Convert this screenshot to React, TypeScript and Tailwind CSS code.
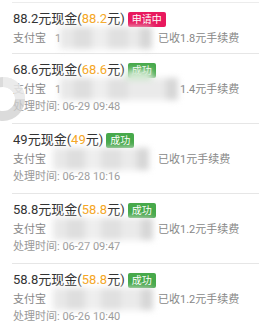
import React from "react";

type Rec = {
  amount: string;
  status: "pending" | "ok";
  acct: string;
  fee: string;
  time?: string;
  blurW: number;
  green?: boolean;
};

const records: Rec[] = [
  { amount: "88.2", status: "pending", acct: "1", fee: "已收1.8元手续费", blurW: 92 },
  { amount: "68.6", status: "ok", acct: "1", fee: "1.4元手续费", time: "06-29 09:48", blurW: 118, green: true },
  { amount: "49", status: "ok", acct: "", fee: "已收1元手续费", time: "06-28 10:16", blurW: 96 },
  { amount: "58.8", status: "ok", acct: "", fee: "已收1.2元手续费", time: "06-27 09:47", blurW: 100 },
  { amount: "58.8", status: "ok", acct: "", fee: "已收1.2元手续费", time: "06-26 10:40", blurW: 100 },
];

//blurred strip hiding the account number
const Blur = ({ w, green }: { w: number; green?: boolean }) => (
  <div className="absolute top-[-3px] h-[22px] flex blur-[3px]" style={{ width: w }}>
    <div className="w-[14px] bg-[#e8e8e8]" />
    <div className="w-[18px] bg-[#dedede]" />
    <div className="w-[16px] bg-[#eeeeee]" />
    <div className="w-[20px] bg-[#e0e0e0]" />
    <div className="flex-1 bg-[#eaeaea]" />
    <div className="w-[12px] bg-[#d6d6d6]" />
    {green && <div className="absolute left-[66px] top-[-8px] w-[26px] h-[10px] bg-[#cfe8cf]" />}
  </div>
);

const Item = ({ r }: { r: Rec }) => (
  <div className={`pl-[13px] pt-[7px] ${r.time ? "pb-[8px]" : "pb-[5px]"}`}>
    <div className="flex items-center h-[18px] text-[13px] text-[#333]">
      <span>
        {r.amount}元现金(<span className="text-[#f5a623]">{r.amount}</span>元)
      </span>
      <span
        className={`ml-[3px] h-[15px] px-[4px] rounded-[2px] text-white text-[10px] leading-[15px] ${
          r.status === "pending" ? "bg-[#e8195e]" : "bg-[#47a94b]"
        }`}
      >
        {r.status === "pending" ? "申请中" : "成功"}
      </span>
    </div>
    <div className="relative flex items-center h-[18px] mt-[2px] text-[11px] text-[#888]">
      <div className="w-[145px] flex items-center shrink-0">
        <span>支付宝</span>
        {r.acct && <span className="ml-[9px]">{r.acct}</span>}
      </div>
      <span className={r.fee.startsWith("已") ? "" : "ml-[22px]"}>{r.fee}</span>
      <div className={r.acct ? "absolute left-[47px] top-0" : "absolute left-[40px] top-0"}>
        <Blur w={r.blurW} green={r.green} />
      </div>
    </div>
    {r.time && <div className="h-[16px] leading-[16px] text-[11px] text-[#999]">处理时间: {r.time}</div>}
  </div>
);

export default function App() {
  return (
    <div
      className="relative w-[259px] h-[328px] overflow-hidden bg-white"
      style={{ fontFamily: 'Roboto, "Noto Sans CJK SC", sans-serif' }}
    >
      <div className="h-[2px]" />
      <div className="ml-[12px] h-px bg-[#ececec]" />
      {records.map((r, i) => (
        <div key={i}>
          <Item r={r} />
          {i < records.length - 1 && <div className="ml-[12px] h-px bg-[#e6e6e6]" />}
        </div>
      ))}
      {/* loading ring overlay */}
      <svg className="absolute left-[-21px] top-[75px]" width="48" height="48" viewBox="0 0 48 48">
        <circle cx="24" cy="24" r="17" fill="none" stroke="#cfcfcf" strokeOpacity="0.75" strokeWidth="10" />
        <path d="M24 7 A17 17 0 0 1 41 24" fill="none" stroke="#ffffff" strokeOpacity="0.45" strokeWidth="10" />
      </svg>
    </div>
  );
}
